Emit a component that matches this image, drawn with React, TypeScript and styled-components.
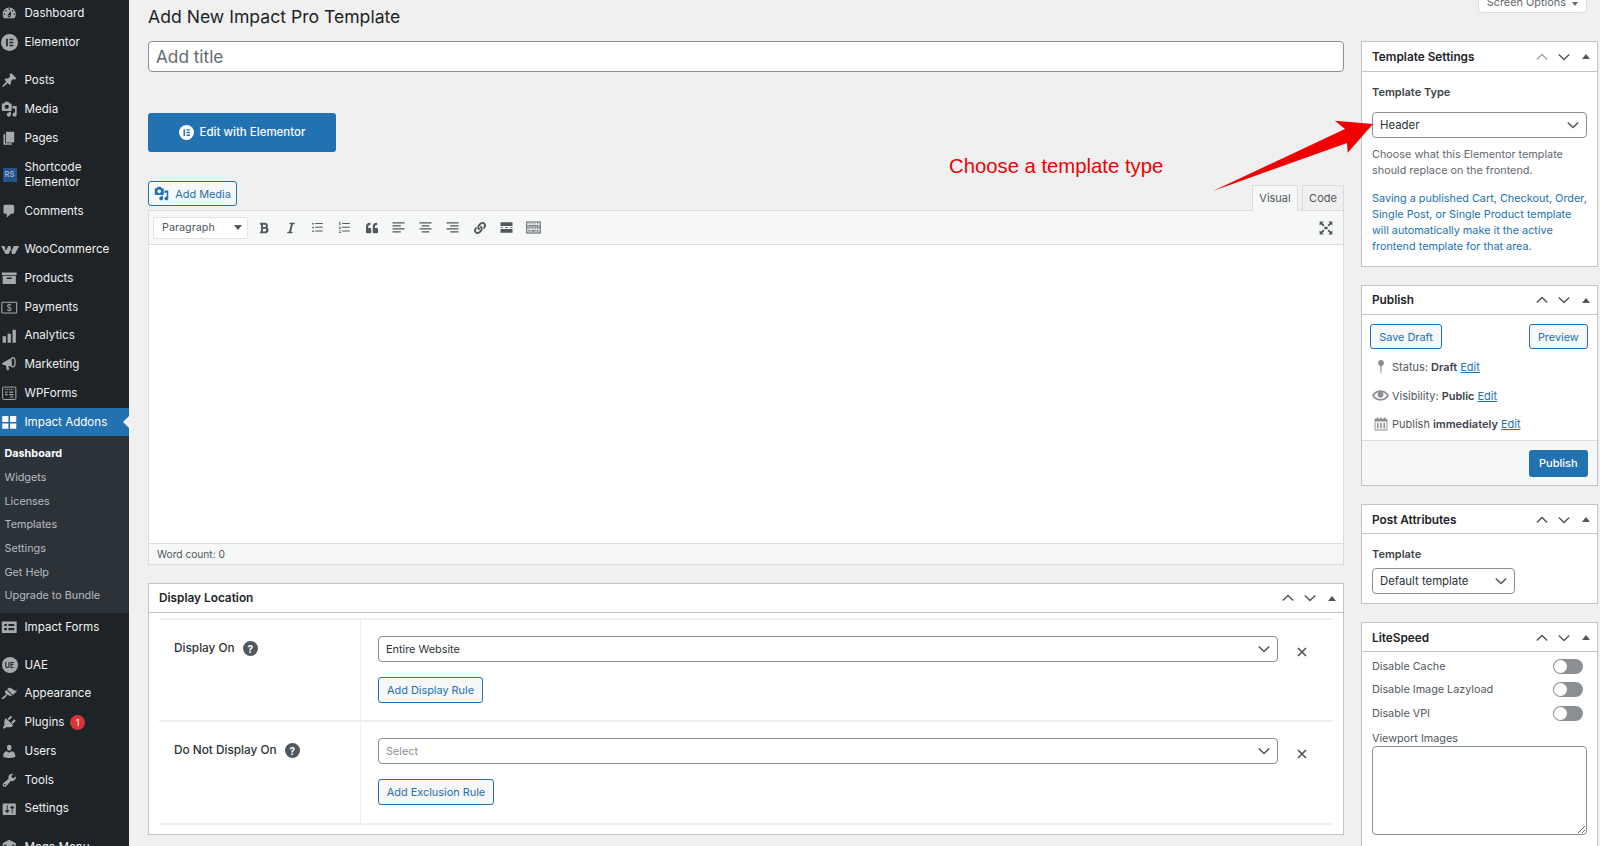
import React from 'react'
import styled, { createGlobalStyle } from 'styled-components'
import { FaBold, FaItalic, FaQuoteLeft, FaLink } from 'react-icons/fa'

const GlobalStyle = createGlobalStyle`
  html, body {
    margin: 0;
    height: 846px;
    overflow: hidden;
    background: #f0f0f1;
    font-family: Inter, "Noto Sans", "Liberation Sans", sans-serif;
    color: #3c434a;
  }
  * { box-sizing: border-box; }
`

const Page = styled.div`
  position: relative;
  display: flex;
  width: 1600px;
  height: 846px;
  overflow: hidden;
`

/* sidebar */
const Sidebar = styled.nav`
  flex: 0 0 129px;
  height: 846px;
  background: #1d2327;
  overflow: hidden;
`
const Menu = styled.div`
  margin-top: -0.7px;
`
const Item = styled.a<{ $active?: boolean; $tall?: boolean; $gap?: boolean }>`
  position: relative;
  display: flex;
  align-items: center;
  height: ${(p) => (p.$tall ? '44.6px' : '28.75px')};
  margin-top: ${(p) => (p.$gap ? '9.4px' : '0')};
  background: ${(p) => (p.$active ? '#2271b1' : 'transparent')};
  color: ${(p) => (p.$active ? '#fff' : '#f0f0f1')};
  font-size: 11.6px;
  line-height: 15px;
`
const ItemIcon = styled.span<{ $active?: boolean }>`
  flex: 0 0 24.5px;
  display: flex;
  align-items: center;
  padding-left: 1px;
  color: ${(p) => (p.$active ? '#fff' : '#a7aaad')};
`
const ActiveArrow = styled.span`
  position: absolute;
  right: 0;
  top: 8px;
  border: 6.5px solid transparent;
  border-right-color: #f0f0f1;
  border-left-width: 0;
`
const Badge = styled.span`
  display: inline-flex;
  align-items: center;
  justify-content: center;
  width: 15px;
  height: 15px;
  margin-left: 5.5px;
  border-radius: 50%;
  background: #d63638;
  color: #fff;
  font-size: 9px;
`
const SubMenu = styled.div`
  background: #2c3338;
  padding: 5.4px 0 5px;
`
const SubItem = styled.a<{ $current?: boolean }>`
  display: flex;
  align-items: center;
  height: 23.7px;
  padding-left: 4.5px;
  font-size: 10.8px;
  font-weight: ${(p) => (p.$current ? 700 : 400)};
  color: ${(p) => (p.$current ? '#fff' : 'rgba(240,246,252,.7)')};
`
const RsIcon = styled.span`
  display: flex;
  align-items: center;
  justify-content: center;
  width: 14px;
  height: 14px;
  margin-left: 1.5px;
  background: #24528a;
  color: #9db4cf;
  font-size: 7.5px;
  font-weight: 600;
`
const UaeIcon = styled.span`
  display: flex;
  align-items: center;
  justify-content: center;
  width: 16px;
  height: 16px;
  margin-left: 0.5px;
  border-radius: 50%;
  background: #a7aaad;
  color: #1d2327;
  font-size: 7px;
  font-weight: 700;
`

/* content */
const Content = styled.main`
  flex: 1;
  display: flex;
  gap: 17px;
  padding-left: 19px;
  min-width: 0;
`
const LeftColumn = styled.div`
  flex: 0 0 1196px;
  display: flex;
  flex-direction: column;
  & > * { flex-shrink: 0; }
`
const Heading = styled.h1`
  margin: 0 0 7px;
  height: 34px;
  font-size: 17.6px;
  font-weight: 400;
  line-height: 34px;
  color: #1d2327;
`
const TitleInput = styled.input`
  display: block;
  width: 100%;
  height: 31px;
  padding: 0 7px;
  border: 1px solid #8c8f94;
  border-radius: 4px;
  background: #fff;
  font-family: inherit;
  font-size: 17.2px;
  outline: none;
  &::placeholder { color: #646970; opacity: 1; }
`
const ElementorButton = styled.a`
  display: flex;
  align-items: center;
  justify-content: center;
  gap: 6px;
  width: 188px;
  height: 39px;
  margin-top: 41px;
  padding-bottom: 1px;
  border-radius: 3px;
  background: #2271b1;
  color: #fff;
  font-size: 11.5px;
  font-weight: 500;
`
const EditorTop = styled.div`
  display: flex;
  justify-content: space-between;
  align-items: flex-end;
  margin-top: 29px;
  height: 29px;
`
const OutlineButton = styled.a<{ $width?: number }>`
  display: inline-flex;
  align-items: center;
  justify-content: center;
  gap: 6px;
  height: 25px;
  width: ${(p) => (p.$width ? `${p.$width}px` : 'auto')};
  border: 1px solid #2271b1;
  border-radius: 3px;
  background: #f6f7f7;
  color: #2271b1;
  font-size: 10.9px;
  white-space: nowrap;
`
const AddMedia = styled(OutlineButton)`
  align-self: flex-start;
`
const Tabs = styled.div`
  display: flex;
  gap: 4px;
  margin-bottom: -1px;
  position: relative;
  z-index: 1;
`
const Tab = styled.a<{ $active?: boolean; $width: number }>`
  display: flex;
  align-items: center;
  justify-content: center;
  width: ${(p) => p.$width}px;
  height: 26px;
  border: 1px solid #dcdcde;
  border-bottom-color: ${(p) => (p.$active ? '#f6f7f7' : '#dcdcde')};
  background: ${(p) => (p.$active ? '#f6f7f7' : '#f0f0f1')};
  color: #50575e;
  font-size: 11px;
`
const EditorBox = styled.div`
  display: flex;
  flex-direction: column;
  height: 354.5px;
  border: 1px solid #dcdcde;
`
const EditorToolbar = styled.div`
  flex: 0 0 34px;
  display: flex;
  align-items: center;
  padding-left: 4px;
  padding-right: 9px;
  background: #f6f7f7;
  border-bottom: 1px solid #dcdcde;
  color: #50575e;
`
const FormatSelect = styled.div`
  display: flex;
  align-items: center;
  justify-content: space-between;
  width: 95px;
  height: 22px;
  padding: 0 5px 0 8px;
  margin-right: 2px;
  background: #fff;
  border: 1px solid #e2e4e7;
  font-size: 10.8px;
  color: #50575e;
`
const CaretDown = styled.span`
  border: 4px solid transparent;
  border-top: 5px solid #50575e;
  border-bottom-width: 0;
`
const ToolButton = styled.span`
  flex: 0 0 27px;
  display: flex;
  align-items: center;
  justify-content: center;
`
const ToolbarSpacer = styled.div`
  flex: 1;
`
const EditorArea = styled.div`
  flex: 1;
  background: #fff;
`
const StatusBar = styled.div`
  flex: 0 0 21px;
  display: flex;
  align-items: center;
  padding-left: 8px;
  background: #f6f7f7;
  border-top: 1px solid #dcdcde;
  font-size: 10.2px;
  color: #50575e;
`

const Panel = styled.section`
  background: #fff;
  border: 1px solid #c3c4c7;
  margin-bottom: 18px;
`
const LocationPanel = styled(Panel)`
  margin-top: 18px;
`
const PanelHeader = styled.header`
  display: flex;
  align-items: center;
  height: 29.5px;
  padding-left: 10px;
  padding-top: 1px;
  border-bottom: 1px solid #c3c4c7;
`
const PanelTitle = styled.h2`
  flex: 1;
  margin: 0;
  font-size: 11.8px;
  font-weight: 600;
  color: #1d2327;
`
const Handle = styled.span<{ $muted?: boolean }>`
  flex: 0 0 22px;
  display: flex;
  align-items: center;
  justify-content: center;
  color: ${(p) => (p.$muted ? '#a7aaad' : '#50575e')};
`
const UpTriangle = styled.span`
  border: 4px solid transparent;
  border-bottom: 5px solid #50575e;
  border-top-width: 0;
`

const RulesBody = styled.div`
  padding: 5px 10px 0;
  height: 220.5px;
`
const RuleRow = styled.div`
  display: grid;
  grid-template-columns: 202px 1fr 55px;
  height: 102.3px;
  border-top: 2px solid #f0f0f1;
  &:last-child {
    height: 104.3px;
    border-bottom: 2px solid #f0f0f1;
  }
`
const RuleLabel = styled.div`
  display: flex;
  align-items: flex-start;
  gap: 8px;
  padding: 21px 0 0 15px;
  border-right: 1px solid #f0f0f1;
  font-size: 11.8px;
  font-weight: 500;
  color: #2c3338;
`
const HelpDot = styled.span`
  display: flex;
  align-items: center;
  justify-content: center;
  width: 15px;
  height: 15px;
  border-radius: 50%;
  background: #50575e;
  color: #fff;
  font-size: 10px;
  font-weight: 700;
`
const RuleFields = styled.div`
  padding: 16px 0 0 17px;
`
const SelectBox = styled.div<{ $width?: number; $muted?: boolean; $fontSize?: number }>`
  display: flex;
  align-items: center;
  justify-content: space-between;
  width: ${(p) => (p.$width ? `${p.$width}px` : '100%')};
  height: 26px;
  padding: 0 7px;
  border: 1px solid #8c8f94;
  border-radius: 4px;
  background: #fff;
  font-size: ${(p) => p.$fontSize ?? 10.9}px;
  color: ${(p) => (p.$muted ? '#8c8f94' : '#2c3338')};
`
const SelectChevron = styled.span`
  display: flex;
  color: #50575e;
`
const RuleButton = styled(OutlineButton)`
  margin-top: 15px;
  height: 26px;
`
const RemoveCell = styled.div`
  display: flex;
  justify-content: center;
  padding-top: 27px;
  padding-right: 7px;
  color: #50575e;
`

const RightColumn = styled.aside`
  flex: 0 0 236px;
  display: flex;
  flex-direction: column;
  & > * { flex-shrink: 0; }
`
const ScreenRow = styled.div`
  display: flex;
  justify-content: flex-end;
  height: 41px;
  padding-right: 11px;
`
const ScreenTab = styled.div`
  display: flex;
  align-items: flex-end;
  justify-content: center;
  gap: 6px;
  width: 109px;
  height: 13px;
  padding-bottom: 3px;
  background: #fff;
  border: 1px solid #dcdcde;
  border-top: 0;
  border-radius: 0 0 4px 4px;
  font-size: 10.9px;
  line-height: 14px;
  color: #646970;
  overflow: hidden;
`
const SmallCaret = styled.span`
  margin-bottom: 3px;
  border: 3px solid transparent;
  border-top: 4px solid #646970;
  border-bottom-width: 0;
`
const SideBody = styled.div`
  padding: 0 10px;
`
const FieldLabel = styled.div`
  font-size: 11px;
  font-weight: 600;
  color: #3c434a;
  line-height: 15px;
`
const HelpText = styled.p<{ $link?: boolean }>`
  margin: 0;
  font-size: 10.85px;
  line-height: 16.2px;
  white-space: nowrap;
  color: ${(p) => (p.$link ? '#2271b1' : '#646970')};
`
const TemplateBody = styled(SideBody)`
  padding-top: 13px;
  height: 194px;
  ${SelectBox} { margin-top: 12px; }
  ${HelpText} { margin-top: 8px; }
  ${HelpText} + ${HelpText} { margin-top: 11.6px; }
`
const PublishActions = styled.div`
  display: flex;
  justify-content: space-between;
  padding: 9px 9px 4.2px 8px;
`
const MetaRow = styled.div`
  display: flex;
  align-items: center;
  height: 28.5px;
  padding-left: 8px;
  font-size: 11px;
  color: #50575e;
  b { font-weight: 600; color: #3c434a; margin: 0 3px; }
  a { color: #2271b1; text-decoration: underline; }
`
const MetaIcon = styled.span`
  flex: 0 0 21px;
  display: flex;
  align-items: center;
  justify-content: center;
  margin-right: 1px;
  color: #8c8f94;
`
const PublishFooter = styled.div`
  display: flex;
  justify-content: flex-end;
  align-items: center;
  height: 44.5px;
  margin-top: 1.8px;
  padding-right: 9px;
  background: #f6f7f7;
  border-top: 1px solid #dcdcde;
`
const PrimaryButton = styled.a`
  display: flex;
  align-items: center;
  justify-content: center;
  width: 59px;
  height: 27px;
  border-radius: 3px;
  background: #2271b1;
  color: #fff;
  font-size: 11px;
  font-weight: 500;
`
const AttributesBody = styled(SideBody)`
  padding-top: 13px;
  height: 68.5px;
  ${SelectBox} { margin-top: 5.5px; }
`
const ToggleRow = styled.div`
  display: flex;
  align-items: center;
  justify-content: space-between;
  height: 23.6px;
  padding-right: 4px;
  font-size: 10.8px;
  color: #50575e;
`
const Toggle = styled.span`
  display: block;
  width: 30px;
  height: 15px;
  padding: 1px;
  border-radius: 8px;
  background: #8c8f94;
  &::before {
    content: '';
    display: block;
    width: 13px;
    height: 13px;
    border-radius: 50%;
    background: #fff;
  }
`
const LiteBody = styled(SideBody)`
  padding-top: 2px;
  height: 300px;
`
const ViewportLabel = styled.div`
  margin-top: 5.5px;
  font-size: 10.8px;
  line-height: 15px;
  color: #50575e;
`
const ViewportInput = styled.textarea`
  display: block;
  width: 100%;
  height: 89px;
  margin-top: 0.5px;
  border: 1px solid #8c8f94;
  border-radius: 4px;
  background: #fff;
  outline: none;
`

/* red annotation, sits over the page */
const ArrowOverlay = styled.svg`
  position: absolute;
  left: 1200px;
  top: 110px;
  pointer-events: none;
`
const Annotation = styled.div`
  position: absolute;
  left: 949px;
  top: 153px;
  font-family: "Liberation Sans", Arial, sans-serif;
  font-size: 20.3px;
  line-height: 26px;
  color: #f00000;
  white-space: nowrap;
`

const Dash = ({ d, size = 16.5 }: { d: string; size?: number }) => (
  <svg width={size} height={size} viewBox="0 0 20 20" fill="currentColor">
    <path d={d} />
  </svg>
)

const Draw = ({ children, size = 16.5 }: { children: React.ReactNode; size?: number }) => (
  <svg width={size} height={size} viewBox="0 0 20 20" fill="currentColor">
    {children}
  </svg>
)

const mediaPath =
  'M13 11V4c0-.55-.45-1-1-1h-1.67L9 1H5L3.67 3H2c-.55 0-1 .45-1 1v7c0 .55.45 1 1 1h10c.55 0 1-.45 1-1zM7 4.5c1.38 0 2.5 1.12 2.5 2.5S8.38 9.5 7 9.5 4.5 8.38 4.5 7 5.62 4.5 7 4.5zM14 6h5v10.5c0 1.38-1.12 2.5-2.5 2.5S14 17.88 14 16.5s1.12-2.5 2.5-2.5c.17 0 .34.02.5.05V9h-3V6zm-4 8.05V13h2v3.5c0 1.38-1.12 2.5-2.5 2.5S7 17.88 7 16.5 8.12 14 9.5 14c.17 0 .34.02.5.05z'

const ElementorGlyph = ({ size = 17, cut = '#1d2327' }: { size?: number; cut?: string }) => (
  <svg width={size} height={size} viewBox="0 0 20 20">
    <circle cx="10" cy="10" r="10" fill="currentColor" />
    <path d="M6 5.5h2v9H6zM10 5.5h4.5v1.8H10zM10 9.1h4.5v1.8H10zM10 12.7h4.5v1.8H10z" fill={cut} />
  </svg>
)

const icons = {
  dashboard: (
    <Dash d="M3.76 16h12.48c1.1-1.37 1.76-3.11 1.76-5 0-4.42-3.58-8-8-8s-8 3.58-8 8c0 1.89.66 3.63 1.76 5zM10 4c.55 0 1 .45 1 1s-.45 1-1 1-1-.45-1-1 .45-1 1-1zM6 6c.55 0 1 .45 1 1s-.45 1-1 1-1-.45-1-1 .45-1 1-1zm8 0c.55 0 1 .45 1 1s-.45 1-1 1-1-.45-1-1 .45-1 1-1zm-5.37 5.55L12 7v6c0 1.1-.9 2-2 2s-2-.9-2-2c0-.57.24-1.08.63-1.45zM4 10c.55 0 1 .45 1 1s-.45 1-1 1-1-.45-1-1 .45-1 1-1zm12 0c.55 0 1 .45 1 1s-.45 1-1 1-1-.45-1-1 .45-1 1-1zm-5 3c0-.55-.45-1-1-1s-1 .45-1 1 .45 1 1 1 1-.45 1-1z" />
  ),
  posts: (
    <Dash d="M10.44 3.02l1.82-1.82 6.36 6.35-1.83 1.82c-1.05-.68-2.48-.57-3.41.36l-.75.75c-.92.93-1.04 2.35-.35 3.41l-1.83 1.82-2.41-2.41-2.8 2.79c-.42.42-3.38 2.71-3.8 2.29s1.86-3.39 2.28-3.81l2.79-2.79L4.1 9.36l1.83-1.82c1.05.69 2.48.57 3.4-.36l.75-.75c.93-.92 1.05-2.35.36-3.41z" />
  ),
  media: <Dash d={mediaPath} />,
  pages: <Dash d="M6 15V2h10v13H6zm-1 1h8v2H3V5h2v11z" />,
  comments: <Dash d="M5 2h9c1.1 0 2 .9 2 2v7c0 1.1-.9 2-2 2h-2l-5 5v-5H5c-1.1 0-2-.9-2-2V4c0-1.1.9-2 2-2z" />,
  woo: (
    <Draw size={18}>
      <path d="M0 5.5h4.2l.9 5.5 2.9-5.500h2.600l.9 5.500 2.900-5.500H19c.8 0 1 .6.7 1.200l-4.200 7.800h-3.300l-1-5.200-2.800 5.200H5.100z" />
    </Draw>
  ),
  products: (
    <Draw>
      <path d="M1 3h18v3H1zM2 7h16v10H2zM7 9v2h6V9z" fillRule="evenodd" />
    </Draw>
  ),
  payments: (
    <Draw>
      <rect x="1" y="4" width="18" height="13" rx="1" fill="none" stroke="currentColor" strokeWidth="1.3" />
      <text x="10" y="14.5" fontSize="10" fontFamily="Inter, sans-serif" textAnchor="middle">
        $
      </text>
    </Draw>
  ),
  analytics: <Dash d="M18 18V2h-4v16h4zm-6 0V7H8v11h4zm-6 0v-8H2v8h4z" />,
  marketing: (
    <Draw>
      <path d="M1.5 8.5l10-5.5c1 2.500 1.600 6 1.400 10L9 11.700l.9 5-2.800.7-1.200-6.200-3.200-.2c-.7-.4-1.200-1.500-1.200-2.500z" />
      <ellipse cx="14.5" cy="7.5" rx="2.6" ry="5.6" fill="none" stroke="currentColor" strokeWidth="1.6" />
    </Draw>
  ),
  wpforms: (
    <Draw>
      <rect x="2" y="2.5" width="16" height="15" rx="1" fill="none" stroke="currentColor" strokeWidth="1.2" />
      <path d="M5 4.500l1.200 1.500L7.500 4.500l1.200 1.500L10 4.500l1.200 1.500 1.300-1.500 1.200 1.500L15 4.500V6H5zM5 8h3v1.300H5zM10 8h5v1.300h-5zM5 11h3v1.300H5zM10 11h5v1.300h-5zM11 14h4v1.300h-4z" />
    </Draw>
  ),
  addons: <Dash d="M1.5 2.5H9v7.2H1.5zM11 2.5h7.500v7.200H11zM1.5 11.5H9V18H1.500zM11 11.500h7.500V18H11z" />,
  forms: (
    <Draw>
      <path d="M1 3h18v14H1zM4 6v2.500h3V6zM9 6v2.500h7V6zM4 11v2.500h3V11zM9 11v2.500h7V11z" fillRule="evenodd" />
    </Draw>
  ),
  appearance: (
    <Dash d="M14.48 11.06L7.41 3.99l1.5-1.5c.5-.56 2.3-.47 3.51.32 1.21.8 1.43 1.28 2.91 2.1 1.18.64 2.45 1.26 4.45.85zm-.71.71L6.7 4.7 4.93 6.47c-.39.39-.39 1.02 0 1.41l1.06 1.06c.39.39.39 1.03 0 1.42-.6.6-1.43 1.11-2.21 1.69-.35.26-.7.53-1.01.84C1.43 13.23.4 14.84 1.2 15.66c.8.79 2.43-.25 3.74-1.57.31-.31.58-.66.85-1.01.57-.79 1.09-1.61 1.69-2.21.39-.39 1.02-.39 1.41 0l1.06 1.06c.39.39 1.02.39 1.41 0z" />
  ),
  plugins: (
    <Dash d="M13.11 4.36L9.87 7.6 8 5.73l3.24-3.24c.35-.34 1.05-.2 1.56.32.52.51.66 1.21.31 1.55zm-8 1.77l.91-1.12 9.01 9.01-1.19.84c-.71.71-2.63 1.16-3.82 1.16H6.14L4.9 17.26c-.59.59-1.54.59-2.12 0-.59-.58-.59-1.53 0-2.12l1.24-1.24v-3.88c0-1.13.4-3.19 1.09-3.89zm7.26 3.97l3.24-3.24c.34-.35 1.04-.21 1.55.31.52.51.66 1.21.31 1.55l-3.24 3.25z" />
  ),
  users: (
    <Dash d="M10 9.25c-2.27 0-2.73-3.44-2.73-3.44C7 4.02 7.82 2 9.97 2c2.16 0 2.98 2.02 2.71 3.81 0 0-.41 3.44-2.68 3.44zm0 2.57L12.72 10c2.39 0 4.52 2.33 4.52 4.53v2.49s-3.65 1.13-7.24 1.13c-3.65 0-7.24-1.13-7.24-1.13v-2.49c0-2.25 1.94-4.48 4.47-4.48z" />
  ),
  tools: (
    <Dash d="M16.68 9.77c-1.34 1.34-3.3 1.67-4.95.99l-5.41 6.52c-.99.99-2.59.99-3.58 0s-.99-2.59 0-3.57l6.52-5.42c-.68-1.65-.35-3.61.99-4.95 1.28-1.28 3.12-1.62 4.72-1.06l-2.89 2.89 2.82 2.82 2.86-2.87c.53 1.58.18 3.39-1.08 4.65zM3.81 16.21c.4.39 1.04.39 1.43 0 .4-.4.4-1.04 0-1.43-.39-.4-1.03-.4-1.43 0-.39.39-.39 1.03 0 1.43z" />
  ),
  settings: (
    <Dash d="M18 16V4c0-.55-.45-1-1-1H3c-.55 0-1 .45-1 1v12c0 .55.45 1 1 1h14c.55 0 1-.45 1-1zM8 11h1c.55 0 1 .45 1 1s-.45 1-1 1H8v1.5c0 .28-.22.5-.5.5s-.5-.22-.5-.5V13H6c-.55 0-1-.45-1-1s.45-1 1-1h1V5.5c0-.28.22-.5.5-.5s.5.22.5.5V11zm5-2h-1c-.55 0-1-.45-1-1s.45-1 1-1h1V5.5c0-.28.22-.5.5-.5s.5.22.5.5V7h1c.55 0 1 .45 1 1s-.45 1-1 1h-1v5.5c0 .28-.22.5-.5.5s-.5-.22-.5-.5V9z" />
  ),
  mega: (
    <Draw>
      <path d="M10 1l8 4v9l-8 5-8-5V5zM4 6.500v6.400l6 3.600 6-3.600V6.500l-6 3z" fillRule="evenodd" />
    </Draw>
  ),
}

const Chevron = ({ dir = 'down', size = 12, width = 1.5 }: { dir?: 'up' | 'down'; size?: number; width?: number }) => (
  <svg width={size} height={size} viewBox="0 0 12 12" fill="none" stroke="currentColor" strokeWidth={width}>
    <path d={dir === 'up' ? 'M.8 8.5L6 3.5l5.200 5' : 'M.8 3.500L6 8.500l5.200-5'} />
  </svg>
)

const Handles = ({ mutedUp }: { mutedUp?: boolean }) => (
  <>
    <Handle $muted={mutedUp}>
      <Chevron dir="up" />
    </Handle>
    <Handle>
      <Chevron />
    </Handle>
    <Handle>
      <UpTriangle />
    </Handle>
  </>
)

const toolbarIcons = [
  <FaBold size={12} />,
  <FaItalic size={12} />,
  <Draw size={15}>
    <path d="M3 4h2v2H3zM7 4h10v1.300H7zM3 9h2v2H3zM7 9h10v1.300H7zM3 14h2v2H3zM7 14h10v1.300H7z" />
  </Draw>,
  <Draw size={15}>
    <path d="M7 4h10v1.300H7zM7 9h10v1.300H7zM7 14h10v1.300H7zM3 2.500h1.400v4H3zM2.500 9h3v1h-3zM2.500 11h3v1h-3zM2.500 14h3v1h-3zM2.500 16h3v1h-3z" />
  </Draw>,
  <FaQuoteLeft size={12} />,
  <Draw size={15}>
    <path d="M2 3h16v1.600H2zM2 7h11v1.600H2zM2 11h16v1.600H2zM2 15h11v1.600H2z" />
  </Draw>,
  <Draw size={15}>
    <path d="M2 3h16v1.600H2zM5 7h10v1.600H5zM2 11h16v1.600H2zM5 15h10v1.600H5z" />
  </Draw>,
  <Draw size={15}>
    <path d="M2 3h16v1.600H2zM7 7h11v1.600H7zM2 11h16v1.600H2zM7 15h11v1.600H7z" />
  </Draw>,
  <FaLink size={12} />,
  <Draw size={15}>
    <path d="M2 3h16v5H2zM2 9.500h3.500v1H2zM8 9.500h4v1H8zM14.500 9.500H18v1h-3.500zM2 12h16v5H2z" />
  </Draw>,
  <Draw size={17}>
    <path
      d="M1.500 3h17v14h-17zM2.700 4.200v4.600h14.600V4.200zM2.700 10v5.800h14.600V10zM4 5.200h1.300v1H4zM6.500 5.200h1.300v1H6.500zM9 5.200h1.300v1H9zM11.500 5.200h1.300v1h-1.300zM14 5.200h1.800v1H14zM4 7h12v.8H4zM4 11h1.300v1H4zM6.500 11h1.300v1H6.500zM9 11h1.300v1H9zM11.500 11h1.300v1h-1.300zM14 11h1.800v1H14zM4 13.200h2.500v1.600H4zM7.500 13.200h5v1.600h-5zM13.500 13.200h2.500v1.600h-2.500z"
      fillRule="evenodd"
    />
  </Draw>,
]

const subItems = ['Widgets', 'Licenses', 'Templates', 'Settings', 'Get Help', 'Upgrade to Bundle']

const rules = [
  { label: 'Display On', value: 'Entire Website', button: 'Add Display Rule', width: 105 },
  { label: 'Do Not Display On', value: 'Select', button: 'Add Exclusion Rule', width: 116, muted: true },
]

export default function App() {
  return (
    <Page>
      <GlobalStyle />
      <Sidebar>
        <Menu>
          <Item>
            <ItemIcon>{icons.dashboard}</ItemIcon>Dashboard
          </Item>
          <Item>
            <ItemIcon>
              <ElementorGlyph />
            </ItemIcon>
            Elementor
          </Item>
          <Item $gap>
            <ItemIcon>{icons.posts}</ItemIcon>Posts
          </Item>
          <Item>
            <ItemIcon>{icons.media}</ItemIcon>Media
          </Item>
          <Item>
            <ItemIcon>{icons.pages}</ItemIcon>Pages
          </Item>
          <Item $tall>
            <ItemIcon>
              <RsIcon>RS</RsIcon>
            </ItemIcon>
            <span>
              Shortcode
              <br />
              Elementor
            </span>
          </Item>
          <Item>
            <ItemIcon>{icons.comments}</ItemIcon>Comments
          </Item>
          <Item $gap>
            <ItemIcon>{icons.woo}</ItemIcon>WooCommerce
          </Item>
          <Item>
            <ItemIcon>{icons.products}</ItemIcon>Products
          </Item>
          <Item>
            <ItemIcon>{icons.payments}</ItemIcon>Payments
          </Item>
          <Item>
            <ItemIcon>{icons.analytics}</ItemIcon>Analytics
          </Item>
          <Item>
            <ItemIcon>{icons.marketing}</ItemIcon>Marketing
          </Item>
          <Item>
            <ItemIcon>{icons.wpforms}</ItemIcon>WPForms
          </Item>
          <Item $active>
            <ItemIcon $active>{icons.addons}</ItemIcon>Impact Addons
            <ActiveArrow />
          </Item>
          <SubMenu>
            <SubItem $current>Dashboard</SubItem>
            {subItems.map((s) => (
              <SubItem key={s}>{s}</SubItem>
            ))}
          </SubMenu>
          <Item>
            <ItemIcon>{icons.forms}</ItemIcon>Impact Forms
          </Item>
          <Item $gap>
            <ItemIcon>
              <UaeIcon>UE</UaeIcon>
            </ItemIcon>
            UAE
          </Item>
          <Item>
            <ItemIcon>{icons.appearance}</ItemIcon>Appearance
          </Item>
          <Item>
            <ItemIcon>{icons.plugins}</ItemIcon>Plugins
            <Badge>1</Badge>
          </Item>
          <Item>
            <ItemIcon>{icons.users}</ItemIcon>Users
          </Item>
          <Item>
            <ItemIcon>{icons.tools}</ItemIcon>Tools
          </Item>
          <Item>
            <ItemIcon>{icons.settings}</ItemIcon>Settings
          </Item>
          <Item $gap>
            <ItemIcon>{icons.mega}</ItemIcon>Mega Menu
          </Item>
        </Menu>
      </Sidebar>

      <Content>
        <LeftColumn>
          <Heading>Add New Impact Pro Template</Heading>
          <TitleInput placeholder="Add title" />
          <ElementorButton>
            <ElementorGlyph size={15} cut="#2271b1" />
            Edit with Elementor
          </ElementorButton>

          <EditorTop>
            <AddMedia $width={89}>
              <Dash d={mediaPath} size={15} />
              Add Media
            </AddMedia>
            <Tabs>
              <Tab $active $width={46}>
                Visual
              </Tab>
              <Tab $width={42}>Code</Tab>
            </Tabs>
          </EditorTop>
          <EditorBox>
            <EditorToolbar>
              <FormatSelect>
                Paragraph
                <CaretDown />
              </FormatSelect>
              {toolbarIcons.map((icon, i) => (
                <ToolButton key={i}>{icon}</ToolButton>
              ))}
              <ToolbarSpacer />
              <Draw size={16}>
                <path d="M2 2h5L5.300 3.700 8 6.400 6.400 8 3.700 5.300 2 7zM18 2v5l-1.700-1.700L13.600 8 12 6.400l2.700-2.700L13 2zM2 18v-5l1.700 1.700L6.400 12 8 13.600l-2.700 2.700L7 18zM18 18h-5l1.700-1.700-2.700-2.700 1.600-1.600 2.700 2.700L18 13zM8 8.500h4v3H8z" />
              </Draw>
            </EditorToolbar>
            <EditorArea />
            <StatusBar>Word count: 0</StatusBar>
          </EditorBox>

          <LocationPanel>
            <PanelHeader>
              <PanelTitle>Display Location</PanelTitle>
              <Handles />
            </PanelHeader>
            <RulesBody>
              {rules.map((r) => (
                <RuleRow key={r.label}>
                  <RuleLabel>
                    {r.label}
                    <HelpDot>?</HelpDot>
                  </RuleLabel>
                  <RuleFields>
                    <SelectBox $muted={r.muted}>
                      {r.value}
                      <SelectChevron>
                        <Chevron />
                      </SelectChevron>
                    </SelectBox>
                    <RuleButton $width={r.width}>{r.button}</RuleButton>
                  </RuleFields>
                  <RemoveCell>
                    <svg width="10" height="10" viewBox="0 0 10 10" stroke="currentColor" strokeWidth="1.7">
                      <path d="M1 1l8 8M9 1l-8 8" />
                    </svg>
                  </RemoveCell>
                </RuleRow>
              ))}
            </RulesBody>
          </LocationPanel>
        </LeftColumn>

        <RightColumn>
          <ScreenRow>
            <ScreenTab>
              Screen Options
              <SmallCaret />
            </ScreenTab>
          </ScreenRow>

          <Panel>
            <PanelHeader>
              <PanelTitle>Template Settings</PanelTitle>
              <Handles mutedUp />
            </PanelHeader>
            <TemplateBody>
              <FieldLabel>Template Type</FieldLabel>
              <SelectBox $fontSize={11.4}>
                Header
                <SelectChevron>
                  <Chevron />
                </SelectChevron>
              </SelectBox>
              <HelpText>
                Choose what this Elementor template
                <br />
                should replace on the frontend.
              </HelpText>
              <HelpText $link>
                Saving a published Cart, Checkout, Order,
                <br />
                Single Post, or Single Product template
                <br />
                will automatically make it the active
                <br />
                frontend template for that area.
              </HelpText>
            </TemplateBody>
          </Panel>

          <Panel>
            <PanelHeader>
              <PanelTitle>Publish</PanelTitle>
              <Handles />
            </PanelHeader>
            <PublishActions>
              <OutlineButton $width={72}>Save Draft</OutlineButton>
              <OutlineButton $width={59}>Preview</OutlineButton>
            </PublishActions>
            <MetaRow>
              <MetaIcon>
                <Draw size={16}>
                  <circle cx="10" cy="5" r="3.6" />
                  <path d="M9 8h2l-.6 10h-.8z" />
                </Draw>
              </MetaIcon>
              Status:<b>Draft</b>
              <a>Edit</a>
            </MetaRow>
            <MetaRow>
              <MetaIcon>
                <Dash
                  size={17}
                  d="M19.7 9.4C17.7 6 14 3.9 10 3.9S2.3 6 .3 9.4L0 10l.3.6c2 3.4 5.7 5.5 9.7 5.5s7.7-2.1 9.7-5.5l.3-.6-.3-.6zM10 14.100c-3.100 0-6-1.600-7.700-4.100C3.600 8 5.700 6.600 8 6.100c-.9.6-1.500 1.700-1.500 2.900 0 1.900 1.600 3.500 3.500 3.500s3.500-1.600 3.500-3.500c0-1.200-.6-2.300-1.500-2.900 2.300.5 4.400 1.900 5.700 3.900-1.700 2.500-4.600 4.100-7.700 4.100z"
                />
              </MetaIcon>
              Visibility:<b>Public</b>
              <a>Edit</a>
            </MetaRow>
            <MetaRow>
              <MetaIcon>
                <Draw size={16}>
                  <path
                    d="M2 3.500h2.500V2h2v1.500H9V2h2v1.500h2.500V2h2v1.500H18V18H2zM3.200 7v9.800h13.600V7zM5 8.500h2v7H5zM9 8.500h2v7H9zM13 8.500h2v7h-2z"
                    fillRule="evenodd"
                  />
                </Draw>
              </MetaIcon>
              Publish<b>immediately</b>
              <a>Edit</a>
            </MetaRow>
            <PublishFooter>
              <PrimaryButton>Publish</PrimaryButton>
            </PublishFooter>
          </Panel>

          <Panel>
            <PanelHeader>
              <PanelTitle>Post Attributes</PanelTitle>
              <Handles />
            </PanelHeader>
            <AttributesBody>
              <FieldLabel>Template</FieldLabel>
              <SelectBox $width={143} $fontSize={11.4}>
                Default template
                <SelectChevron>
                  <Chevron />
                </SelectChevron>
              </SelectBox>
            </AttributesBody>
          </Panel>

          <Panel>
            <PanelHeader>
              <PanelTitle>LiteSpeed</PanelTitle>
              <Handles />
            </PanelHeader>
            <LiteBody>
              <ToggleRow>
                Disable Cache
                <Toggle />
              </ToggleRow>
              <ToggleRow>
                Disable Image Lazyload
                <Toggle />
              </ToggleRow>
              <ToggleRow>
                Disable VPI
                <Toggle />
              </ToggleRow>
              <ViewportLabel>Viewport Images</ViewportLabel>
              <ViewportInput />
            </LiteBody>
          </Panel>
        </RightColumn>
      </Content>

      <Annotation>Choose a template type</Annotation>
      <ArrowOverlay width="180" height="90" viewBox="1200 110 180 90">
        <path d="M1373 124L1335 120.7L1345 129L1213 191L1347 143L1347.7 152.7z" fill="#f00000" />
      </ArrowOverlay>
    </Page>
  )
}
